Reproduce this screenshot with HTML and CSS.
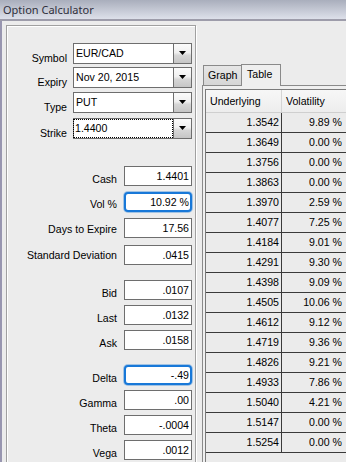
FILE: index.html
```html
<!DOCTYPE html>
<html>
<head>
<meta charset="utf-8">
<link rel="stylesheet" href="styles.css">
</head>
<body>
<div class="titlebar"><span class="title">Option Calculator</span></div>
<div class="window">
  <div class="left-panel">
    <div class="row combo-row r-symbol"><span class="lbl">Symbol</span><div class="combo"><span class="combo-text">EUR/CAD</span><span class="combo-btn"><svg width="7" height="4" viewBox="0 0 7 4"><polygon points="0,0 7,0 3.5,4" fill="#000"/></svg></span></div></div>
    <div class="row combo-row r-expiry"><span class="lbl">Expiry</span><div class="combo"><span class="combo-text">Nov 20, 2015</span><span class="combo-btn"><svg width="7" height="4" viewBox="0 0 7 4"><polygon points="0,0 7,0 3.5,4" fill="#000"/></svg></span></div></div>
    <div class="row combo-row r-type"><span class="lbl">Type</span><div class="combo"><span class="combo-text">PUT</span><span class="combo-btn"><svg width="7" height="4" viewBox="0 0 7 4"><polygon points="0,0 7,0 3.5,4" fill="#000"/></svg></span></div></div>
    <div class="row combo-row r-strike"><span class="lbl">Strike</span><div class="combo"><span class="combo-text focus-rect">1.4400</span><span class="combo-btn"><svg width="7" height="4" viewBox="0 0 7 4"><polygon points="0,0 7,0 3.5,4" fill="#000"/></svg></span></div></div>

    <div class="row field-row r-cash"><span class="lbl">Cash</span><div class="field">1.4401</div></div>
    <div class="row field-row r-vol"><span class="lbl">Vol %</span><div class="field focused">10.92 %</div></div>
    <div class="row field-row r-days"><span class="lbl">Days to Expire</span><div class="field">17.56</div></div>
    <div class="row field-row r-std"><span class="lbl">Standard Deviation</span><div class="field">.0415</div></div>

    <div class="row field-row r-bid"><span class="lbl">Bid</span><div class="field">.0107</div></div>
    <div class="row field-row r-next"><span class="lbl">Last</span><div class="field">.0132</div></div>
    <div class="row field-row r-next"><span class="lbl">Ask</span><div class="field">.0158</div></div>

    <div class="row field-row r-delta"><span class="lbl">Delta</span><div class="field focused">-.49</div></div>
    <div class="row field-row r-next"><span class="lbl">Gamma</span><div class="field">.00</div></div>
    <div class="row field-row r-next"><span class="lbl">Theta</span><div class="field">-.0004</div></div>
    <div class="row field-row r-next"><span class="lbl">Vega</span><div class="field">.0012</div></div>
  </div>

  <div class="right-panel">
    <div class="tabs">
      <div class="tab">Graph</div>
      <div class="tab tab-active">Table</div>
    </div>
    <div class="tab-pane">
      <div class="scroll">
        <div class="thead">
          <div class="th c1">Underlying</div>
          <div class="th c2">Volatility</div>
        </div>
        <div class="tr"><div class="td c1">1.3542</div><div class="td c2">9.89 %</div></div>
        <div class="tr"><div class="td c1">1.3649</div><div class="td c2">0.00 %</div></div>
        <div class="tr"><div class="td c1">1.3756</div><div class="td c2">0.00 %</div></div>
        <div class="tr"><div class="td c1">1.3863</div><div class="td c2">0.00 %</div></div>
        <div class="tr"><div class="td c1">1.3970</div><div class="td c2">2.59 %</div></div>
        <div class="tr"><div class="td c1">1.4077</div><div class="td c2">7.25 %</div></div>
        <div class="tr"><div class="td c1">1.4184</div><div class="td c2">9.01 %</div></div>
        <div class="tr"><div class="td c1">1.4291</div><div class="td c2">9.30 %</div></div>
        <div class="tr"><div class="td c1">1.4398</div><div class="td c2">9.09 %</div></div>
        <div class="tr"><div class="td c1">1.4505</div><div class="td c2">10.06 %</div></div>
        <div class="tr"><div class="td c1">1.4612</div><div class="td c2">9.12 %</div></div>
        <div class="tr"><div class="td c1">1.4719</div><div class="td c2">9.36 %</div></div>
        <div class="tr"><div class="td c1">1.4826</div><div class="td c2">9.21 %</div></div>
        <div class="tr"><div class="td c1">1.4933</div><div class="td c2">7.86 %</div></div>
        <div class="tr"><div class="td c1">1.5040</div><div class="td c2">4.21 %</div></div>
        <div class="tr"><div class="td c1">1.5147</div><div class="td c2">0.00 %</div></div>
        <div class="tr"><div class="td c1">1.5254</div><div class="td c2">0.00 %</div></div>
      </div>
    </div>
  </div>
</div>
</body>
</html>
```

FILE: styles.css
```css
* { box-sizing: border-box; }

body {
  margin: 0;
  width: 346px;
  height: 462px;
  overflow: hidden;
  background: #ececec;
  font-family: "Liberation Sans", Arial, sans-serif;
  font-size: 10.6px;
  color: #000;
}

.titlebar {
  height: 21px;
  border-bottom: 2px solid #9d9caa;
  background: linear-gradient(to bottom, #a9aebc, #dde0ea);
  display: flex;
  align-items: center;
  padding-left: 3px;
}

.title {
  font-family: "Noto Sans", "Open Sans", sans-serif;
  font-size: 11px;
  color: #2e2e3a;
  line-height: 14px;
}

.window {
  display: flex;
  align-items: flex-start;
  height: 441px;
  border-left: 2px solid #9896b0;
}

/* ---------- left panel ---------- */
.left-panel {
  margin-left: 4px;
  margin-top: 4px;
  width: 190px;
  height: 460px;
  flex: none;
  border: 1px solid #a0a0a0;
  box-shadow: inset 1px 1px 0 #fff, 1px 1px 0 #fff;
  padding-right: 3px;
  display: flex;
  flex-direction: column;
}

.row {
  display: flex;
  justify-content: flex-end;
  align-items: flex-start;
  flex: none;
}

.lbl {
  line-height: 12px;
  white-space: nowrap;
}

.combo-row { height: 21px; }
.combo-row .lbl { margin-right: 6px; padding-top: 9px; }

.r-symbol { margin-top: 17px; }
.r-expiry { margin-top: 3px; }
.r-type   { margin-top: 4px; }
.r-strike { margin-top: 5px; }

.combo {
  width: 119px;
  height: 21px;
  border: 1px solid #6e6e6e;
  background: #fff;
  display: flex;
}

.combo-text {
  flex: 1;
  padding-left: 2px;
  line-height: 19px;
  white-space: nowrap;
}

.combo-text.focus-rect {
  margin: 1px 1px 1px 0;
  padding-left: 1px;
  line-height: 17px;
  outline: 1px dotted #000;
  outline-offset: 0;
}

.combo-btn {
  width: 18px;
  border-left: 1px solid #6e6e6e;
  background: linear-gradient(to bottom, #fbfbfb 0%, #f0f0f0 45%, #d6d6d6 60%, #c6c6c6 100%);
  display: flex;
  align-items: center;
  justify-content: center;
  padding-bottom: 2px;
}

.combo-btn svg { display: block; }

.field-row { height: 20px; }
.field-row .lbl { margin-right: 7px; padding-top: 7px; }

.r-cash  { margin-top: 27px; }
.r-vol   { margin-top: 6px; }
.r-vol .lbl { padding-top: 6px; }
.r-days  { margin-top: 6px; }
.r-days .lbl { padding-top: 5px; }
.r-std   { margin-top: 7px; }
.r-std .lbl { padding-top: 4px; }
.r-bid   { margin-top: 15px; }
.r-next  { margin-top: 5px; }
.r-delta { margin-top: 15px; }

.field {
  width: 68px;
  height: 20px;
  border: 1px solid #6e6e6e;
  background: #fff;
  text-align: right;
  padding-right: 2px;
  line-height: 18px;
  white-space: nowrap;
}

.field.focused {
  border: 2px solid #1878d8;
  border-radius: 4px;
  padding-right: 1px;
  line-height: 16px;
  box-shadow: 0 0 0 1px rgba(24, 120, 216, 0.35);
}

/* ---------- right panel ---------- */
.right-panel {
  flex: 1;
  margin-left: 6px;
  margin-top: 43px;
  display: flex;
  flex-direction: column;
}

.tabs {
  display: flex;
  align-items: flex-end;
  height: 21px;
  padding-left: 1px;
  position: relative;
  z-index: 1;
}

.tab {
  height: 20px;
  width: 39px;
  border: 1px solid #8a8a8a;
  border-bottom: none;
  background: linear-gradient(to bottom, #e6e6e6, #d6d6d6);
  padding-left: 4px;
  line-height: 19px;
  white-space: nowrap;
}

.tab-active {
  height: 22px;
  width: 40px;
  margin-left: -1px;
  margin-bottom: -1px;
  background: #efefef;
  padding-left: 5px;
  line-height: 18px;
}

.tab-pane {
  border-top: 1px solid #8a8a8a;
  border-left: 1px solid #8a8a8a;
  background: #efefef;
  padding: 3px 0 0 2px;
  height: 400px;
}

.scroll {
  border-top: 1px solid #7a7a7a;
  border-left: 1px solid #7a7a7a;
  background: #ebebeb;
  height: 380px;
}

.thead {
  display: flex;
  height: 23px;
  border-bottom: 1px solid #cfcfcf;
  background: linear-gradient(to bottom, #f7f7f7, #ededed);
}

.th {
  line-height: 22px;
  padding-left: 4px;
  white-space: nowrap;
}

.th.c1 { width: 76px; border-right: 1px solid #d4d4d4; }
.th.c2 { width: 64px; }

.tr {
  display: flex;
  height: 20px;
  border-bottom: 1px solid #3a3a3a;
}

.td {
  line-height: 19px;
  text-align: right;
  white-space: nowrap;
}

.td.c1 { width: 76px; border-right: 1px solid #3a3a3a; padding-right: 2px; }
.td.c2 { width: 64px; padding-right: 4px; }
```
